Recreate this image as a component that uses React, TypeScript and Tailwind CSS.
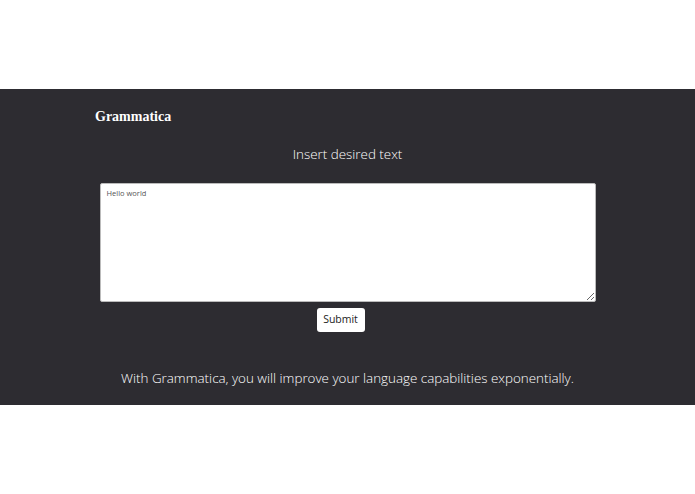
import React from "react";

export default function App() {
  return (
    <div className="w-[695px] h-[494px] bg-white flex flex-col">
      <div className="h-[89px]" />
      {/* dark band */}
      <div className="bg-[#2d2c31] h-[316px] flex flex-col pt-[20px] font-['Open_Sans',sans-serif] text-white">
        <div className="pl-[95px] font-['Liberation_Serif',serif] font-bold text-[14px] leading-[16px] text-white">
          Grammatica
        </div>
        <div className="mt-[19px] text-center text-[13.4px] leading-[20px] font-light">
          Insert desired text
        </div>
        <div className="mt-[19px] flex justify-center">
          <textarea
            defaultValue="Hello world"
            className="w-[496px] h-[119px] bg-white rounded-[2px] border border-[#bbb] px-[6px] py-[3px] font-['Open_Sans',sans-serif] text-[7.5px] leading-[12px] text-[#555] resize-y outline-none"
          />
        </div>
        <div className="mt-[6px] flex justify-center pr-[14px]">
          <button className="w-[48px] h-[24px] bg-white rounded-[3px] text-[10.5px] text-[#222] font-normal">
            Submit
          </button>
        </div>
        <div className="mt-[36px] text-center text-[13.4px] leading-[20px] font-light">
          With Grammatica, you will improve your language capabilities exponentially.
        </div>
      </div>
    </div>
  );
}
